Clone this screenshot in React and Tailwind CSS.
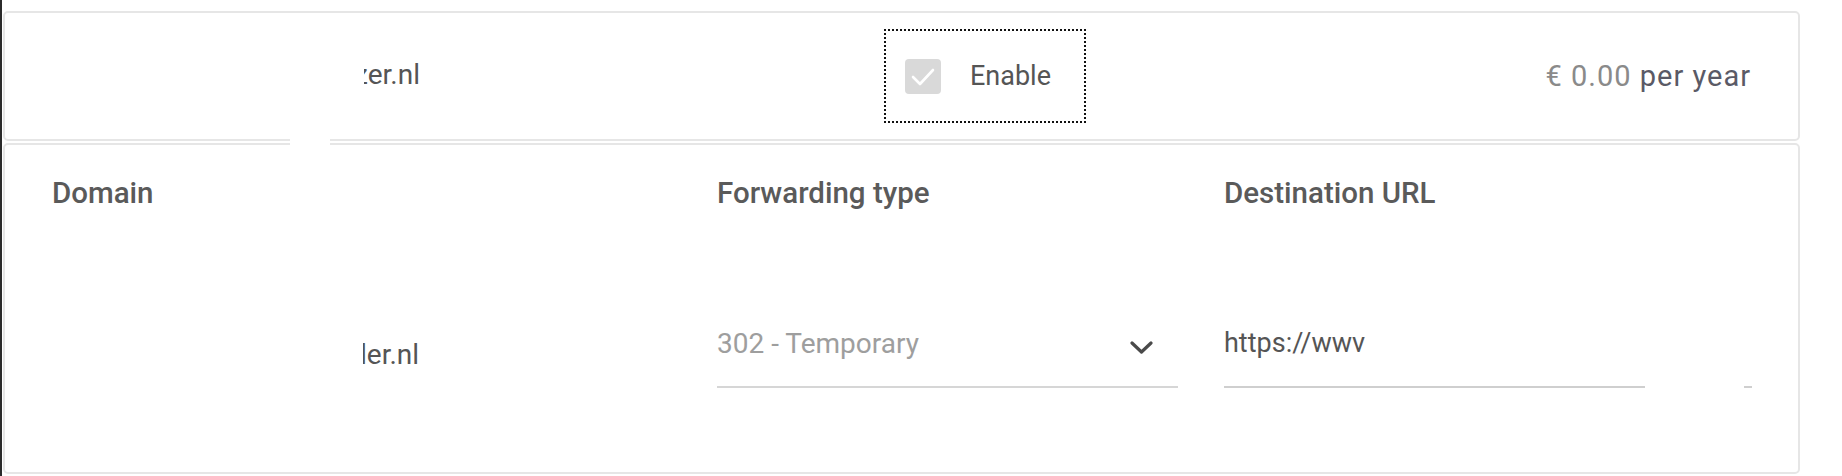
import React from "react";

function Chevron() {
  return (
    <svg width="23" height="14" viewBox="0 0 23 14" fill="none">
      <polyline points="2,2 11.5,11 21,2" stroke="#4a4a4a" strokeWidth="3.2" strokeLinecap="round" strokeLinejoin="round" />
    </svg>
  );
}

function Checkbox() {
  return (
    <div className="flex h-[35px] w-[36px] shrink-0 items-center justify-center rounded-[4px] bg-[#d9d9d9]">
      <svg width="36" height="35" viewBox="0 0 36 35" fill="none">
        <polyline points="8,18 15,25 28,11" stroke="#fff" strokeWidth="2.6" strokeLinecap="round" strokeLinejoin="round" />
      </svg>
    </div>
  );
}

// domain text with its left part hidden under a white redaction box
function Redacted({ text, className, cover }) {
  return (
    <div className={"relative whitespace-nowrap " + className}>
      <span>{text}</span>
      <div className={"absolute inset-y-0 left-0 bg-white " + cover} />
    </div>
  );
}

export default function App() {
  return (
    <div className="relative flex h-[476px] w-[1842px] bg-white font-['Roboto',sans-serif] text-[#555]">
      <div className="w-[2px] bg-[#2b2b2b]" />
      <div className="ml-[1px] w-[1797px] pt-[11px]">
        <div className="flex h-[130px] items-center rounded-[5px] border-2 border-[#e6e6e6] pr-[47px]">
          <Redacted text="zer.nl" cover="w-[10px]" className="mb-[4px] ml-[349px] text-[28px] leading-[33px]" />
          <div className="ml-[464px] flex h-[94px] w-[202px] items-center border-[2.5px] border-dotted border-[#111] pl-[19px]">
            <Checkbox />
            <span className="ml-[29px] text-[27px] leading-[33px] text-[#555]">Enable</span>
          </div>
          <div className="ml-auto text-[29px] leading-[33px] tracking-[1px]">
            <span className="text-[#8a8a8a]">€ 0.00</span>{" "}
            <span className="text-[#5a5a66]">per year</span>
          </div>
        </div>

        <div className="mt-[2px] h-[331px] rounded-[5px] border-2 border-[#e6e6e6] pl-[47px] pt-[32px]">
          <div className="flex text-[29.5px] font-medium leading-[33px] text-[#5a5a5a]">
            <div className="w-[665px]">Domain</div>
            <div className="w-[507px]">Forwarding type</div>
            <div>Destination URL</div>
          </div>

          <div className="mt-[117px] flex items-start text-[28px] leading-[33px]">
            <div className="w-[665px]">
              <Redacted text="der.nl" cover="w-[12px]" className="ml-[299px] mt-[11px]" />
            </div>
            <div className="flex w-[461px] items-center justify-between border-b-2 border-[#d6d6d6] pb-[26px]">
              <span className="text-[#9e9e9e]">302 - Temporary</span>
              <span className="mr-[25px] mt-[8px]">
                <Chevron />
              </span>
            </div>
            <div className="ml-[46px] w-[540px]">
              <div className="text-[27px] text-[#555]">https://wwv</div>
              <div className="mt-[26px] flex">
                <div className="h-[2px] w-[421px] bg-[#cfcfcf]" />
                <div className="ml-[99px] h-[2px] w-[8px] bg-[#cfcfcf]" />
              </div>
            </div>
          </div>
        </div>
      </div>
      <div className="absolute left-[290px] top-[135px] h-[14px] w-[40px] bg-white" />
    </div>
  );
}
